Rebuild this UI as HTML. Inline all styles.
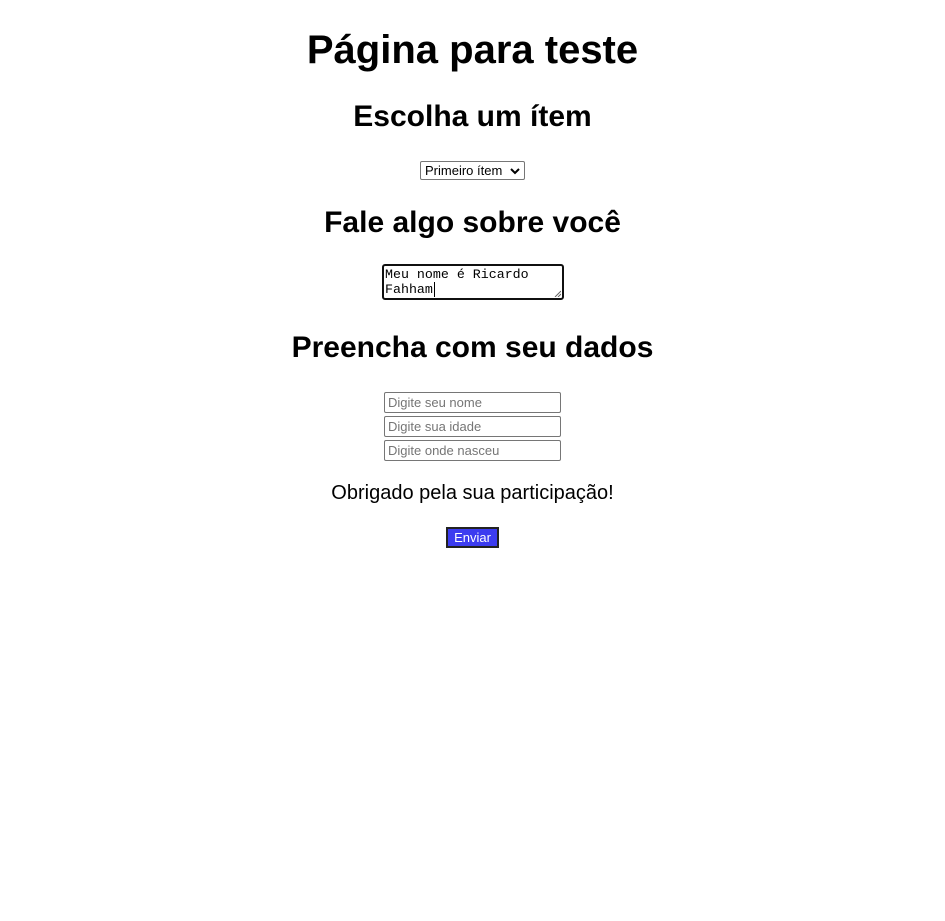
<!DOCTYPE html>
<html><head><meta charset="utf-8"><style>
body{margin:0;width:945px;height:921px;background:#fff;font-family:"Liberation Sans",Arial,sans-serif;position:relative;color:#000}
.c{position:absolute;left:0;width:945px;text-align:center;margin:0;white-space:nowrap}
h1.c{font-size:40px;line-height:46px;top:27px;font-weight:bold}
h2.c{font-size:30px;line-height:34px;font-weight:bold}
.box{position:absolute;box-sizing:border-box}
.sel{left:420px;top:161px;width:105px;height:19px;border:1px solid #767676;border-radius:2px;font-size:13px;line-height:17px;padding-left:4px}
.ta{left:382px;top:264px;width:182px;height:36px;border:2px solid #101010;border-radius:3px;font-family:"Liberation Mono",monospace;font-size:13.3px;line-height:15px;padding:1px 1px}
.in{left:384px;width:177px;height:21px;border:1px solid #767676;border-radius:2px;font-size:13px;line-height:19px;padding-left:3px;color:#757575}
.btn{left:446px;top:527px;width:53px;height:21px;background:#3c3cf0;border:2px solid #222;color:#fff;font-size:13px;line-height:17px;text-align:center}
</style></head><body>
<h1 class="c">Página para teste</h1>
<h2 class="c" style="top:100px">Escolha um ítem</h2>
<div class="box sel">Primeiro ítem <svg width="10" height="8" viewBox="0 0 10 8" style="position:absolute;right:4px;top:5px"><path d="M1 2 L5 6 L9 2" stroke="#000" stroke-width="2" fill="none"/></svg></div>
<h2 class="c" style="top:206px">Fale algo sobre você</h2>
<div class="box ta">Meu nome é Ricardo<br>Fahham<span style="border-left:1px solid #000;margin-left:1px"></span><svg width="7" height="7" viewBox="0 0 7 7" style="position:absolute;right:1px;bottom:1px"><path d="M1 7 L7 1 M4 7 L7 4" stroke="#666" stroke-width="1"/></svg></div>
<h2 class="c" style="top:331px">Preencha com seu dados</h2>
<div class="box in" style="top:392px">Digite seu nome</div>
<div class="box in" style="top:416px">Digite sua idade</div>
<div class="box in" style="top:440px">Digite onde nasceu</div>
<p class="c" style="top:481px;font-size:20px;line-height:24px">Obrigado pela sua participação!</p>
<div class="box btn">Enviar</div>
</body></html>
